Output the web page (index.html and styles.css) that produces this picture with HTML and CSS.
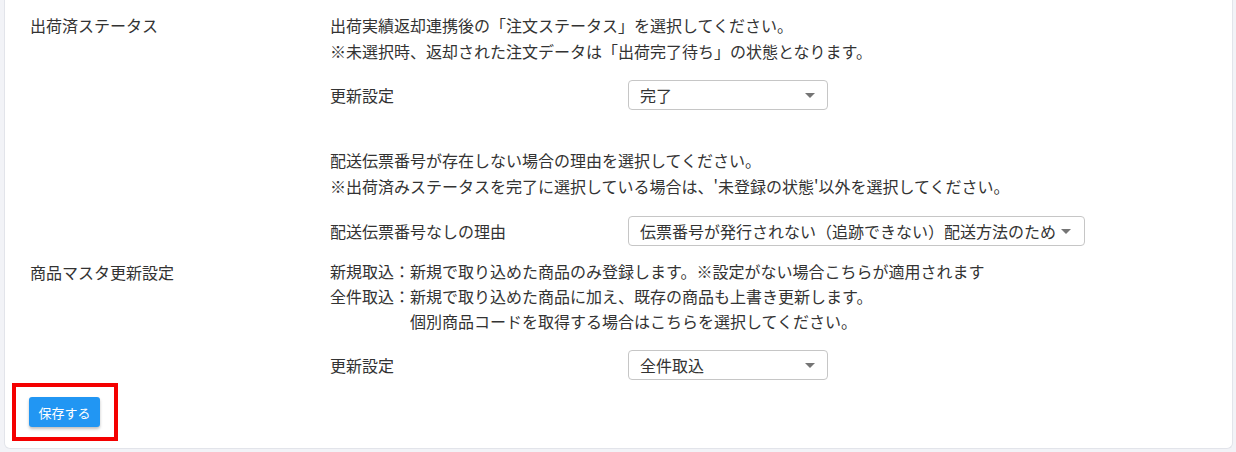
FILE: index.html
```html
<!DOCTYPE html>
<html lang="ja">
<head>
  <meta charset="UTF-8">
  <title>連携設定</title>
  <link rel="stylesheet" href="styles.css">
</head>
<body>
  <div class="card">
    <!-- 出荷済ステータス -->
    <div class="setting">
      <div class="setting-label">出荷済ステータス</div>
      <div class="setting-body">
        <p class="desc">出荷実績返却連携後の「注文ステータス」を選択してください。<br>※未選択時、返却された注文データは「出荷完了待ち」の状態となります。</p>
        <div class="field">
          <span>更新設定</span>
          <div class="select select-sm">
            <span>完了</span>
            <svg width="10" height="5" viewBox="0 0 10 5"><path d="M0 0h10L5 5z" fill="#757575"/></svg>
          </div>
        </div>
        <p class="desc desc-gap">配送伝票番号が存在しない場合の理由を選択してください。<br>※出荷済みステータスを完了に選択している場合は、'未登録の状態'以外を選択してください。</p>
        <div class="field field-reason">
          <span>配送伝票番号なしの理由</span>
          <div class="select select-lg">
            <span>伝票番号が発行されない（追跡できない）配送方法のため</span>
            <svg width="10" height="5" viewBox="0 0 10 5"><path d="M0 0h10L5 5z" fill="#757575"/></svg>
          </div>
        </div>
      </div>
    </div>

    <!-- 商品マスタ更新設定 -->
    <div class="setting setting-next">
      <div class="setting-label">商品マスタ更新設定</div>
      <div class="setting-body">
        <dl class="modes">
          <dt>新規取込：</dt>
          <dd>新規で取り込めた商品のみ登録します。※設定がない場合こちらが適用されます</dd>
          <dt>全件取込：</dt>
          <dd>新規で取り込めた商品に加え、既存の商品も上書き更新します。<br>個別商品コードを取得する場合はこちらを選択してください。</dd>
        </dl>
        <div class="field">
          <span>更新設定</span>
          <div class="select select-sm">
            <span>全件取込</span>
            <svg width="10" height="5" viewBox="0 0 10 5"><path d="M0 0h10L5 5z" fill="#757575"/></svg>
          </div>
        </div>
      </div>
    </div>

    <div class="actions">
      <div class="highlight">
        <button class="btn-save">保存する</button>
      </div>
    </div>
  </div>
</body>
</html>
```

FILE: styles.css
```css
body {
  margin: 0;
  padding: 0 3px 3px 4px;
  background-color: #f2f3f7;
  font-family: "Noto Sans CJK JP", "Noto Sans", sans-serif;
  font-size: 16px;
  color: #333;
}

.card {
  height: 449px;
  box-sizing: border-box;
  padding: 12px 0 8px 0;
  background-color: #fff;
  border: 1px solid #e2e4ea;
  border-top: none;
  border-radius: 0 0 6px 6px;
}

.setting {
  display: grid;
  grid-template-columns: 300px 1fr;
  padding-left: 25px;
  line-height: 26px;
}

.setting-next {
  margin-top: 13px;
}

.desc {
  margin: 0;
}

.desc-gap {
  margin-top: 37px;
}

.field {
  display: grid;
  grid-template-columns: 298px auto;
  align-items: center;
  justify-content: start;
  margin-top: 16px;
}

.field-reason {
  margin-top: 17px;
}

.modes {
  display: grid;
  grid-template-columns: auto 1fr;
  margin: 0;
  line-height: 25px;
}

.modes dt,
.modes dd {
  margin: 0;
}

.select {
  display: flex;
  align-items: center;
  justify-content: space-between;
  box-sizing: border-box;
  height: 30px;
  padding: 0 12px 0 11px;
  border: 1px solid #c6c6c6;
  border-radius: 4px;
  background-color: #fff;
}

.select-sm {
  width: 200px;
}

.select-lg {
  width: 457px;
  padding-right: 13px;
}

.actions {
  display: flex;
  margin-top: 3px;
  padding-left: 7px;
}

.highlight {
  border: 4px solid #f40000;
  padding: 10px 14px 10px 13px;
}

.btn-save {
  display: block;
  width: 71px;
  height: 30px;
  padding: 0;
  border: none;
  border-radius: 3px;
  background-color: #2196f3;
  color: #fff;
  font-family: "Noto Sans CJK JP", sans-serif;
  font-size: 13px;
  box-shadow: 0 2px 3px rgba(0, 0, 0, 0.25);
  cursor: pointer;
}
```
